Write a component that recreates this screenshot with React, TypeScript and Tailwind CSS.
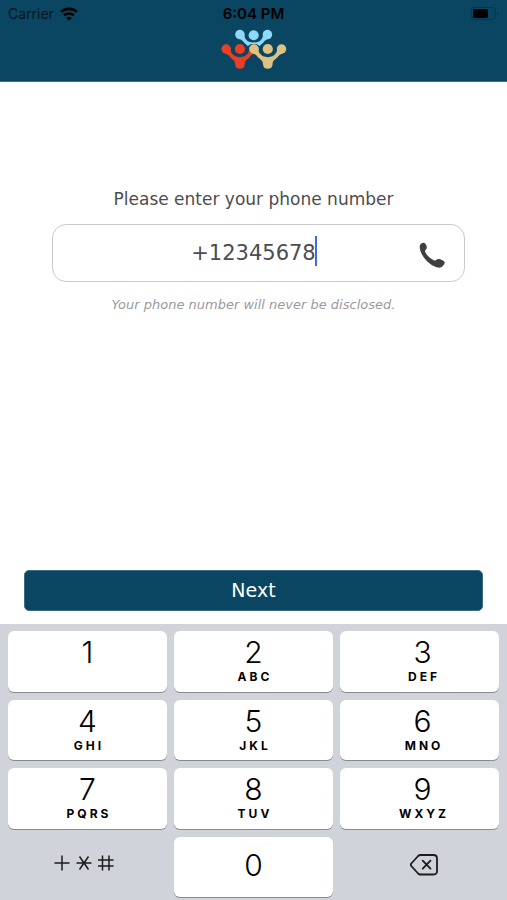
import React, { useState } from 'react';

const KEYS = [
  { digit: '1', letters: '' },
  { digit: '2', letters: 'ABC' },
  { digit: '3', letters: 'DEF' },
  { digit: '4', letters: 'GHI' },
  { digit: '5', letters: 'JKL' },
  { digit: '6', letters: 'MNO' },
  { digit: '7', letters: 'PQRS' },
  { digit: '8', letters: 'TUV' },
  { digit: '9', letters: 'WXYZ' },
];

const WifiIcon = () => (
  <svg width="18" height="14" viewBox="0 0 18 14" fill="none" stroke="#000" strokeWidth="2.6" aria-hidden="true">
    <path d="M1 4.9C5.4 0.9 12.6 0.9 17 4.9" />
    <path d="M4 8.3C6.8 5.8 11.2 5.8 14 8.3" />
    <path d="M9 13.8L6.2 10.8C7.8 9.4 10.2 9.4 11.8 10.8Z" fill="#000" stroke="none" />
  </svg>
);

const BatteryIcon = () => (
  <svg width="28" height="14" viewBox="0 0 28 14" aria-hidden="true">
    <rect x="0.5" y="0.5" width="24" height="12" rx="3" fill="none" stroke="#06354b" />
    <rect x="2" y="2" width="15" height="9" rx="1.5" fill="#000" />
    <path d="M26 4.5C28 5.2 28 7.8 26 8.5Z" fill="#06354b" />
  </svg>
);

interface PersonProps {
  x: number;
  y: number;
  color: string;
}

const Person: React.FC<PersonProps> = ({ x, y, color }) => (
  <g transform={`translate(${x} ${y})`} fill={color}>
    <circle cx="-42" cy="0" r="14.5" />
    <circle cx="0" cy="0" r="15.5" />
    <circle cx="42" cy="0" r="14.5" />
    <path d="M-46 13C-38 15 -34 20 -29 26C-23 32 -16 35 -15 42L-14 50C-13 56 -8 60 0 60C8 60 13 56 14 50L15 42C16 35 23 32 29 26C34 20 38 15 46 13L29 -6C29 2 28 9 24 14C19 21 11 25 0 25C-11 25 -19 21 -24 14C-28 9 -29 2 -29 -6Z" />
  </g>
);

const Logo = () => (
  <svg width="66" height="40" viewBox="33 88 200 122" role="img" aria-label="Logo">
    <g transform="translate(132 105)" fill="#8ed8f8">
      <circle cx="-42" cy="0" r="14.5" />
      <circle cx="0" cy="2" r="15.5" />
      <circle cx="42" cy="0" r="14.5" />
      <path d="M-46 13C-38 15 -34 19 -29 25L-18 35L-8 29L8 29L18 35L29 25C34 19 38 15 46 13L29 -6C29 2 28 9 24 14C19 21 11 24 0 24C-11 24 -19 21 -24 14C-28 9 -29 2 -29 -6Z" />
    </g>
    <Person x={90} y={149} color="#ea3f24" />
    <Person x={175} y={149} color="#ddc283" />
  </svg>
);

const PhoneIcon = () => (
  <svg width="26" height="26" viewBox="507 189 77 77" fill="#3f3f41" aria-hidden="true">
    <path d="M509 202C509 195 517 190 522 191C527 193 531 201 530 207C529 213 523 213 525 218C530 229 541 239 552 244C557 245 559 239 565 239C571 239 580 244 583 248C584 254 577 264 569 265C556 265 541 256 530 245C518 233 509 216 509 202Z" />
  </svg>
);

const BackspaceIcon = () => (
  <svg width="28" height="22" viewBox="0 0 28 22" fill="none" stroke="#1c1c1e" strokeWidth="1.8" strokeLinecap="round" strokeLinejoin="round" aria-hidden="true">
    <path d="M10.5 1H23.5C25.8 1 27 2.3 27 4.5V17C27 19.2 25.8 20.5 23.5 20.5H10.5C9.5 20.5 8.8 20.2 8.1 19.5L1.3 12C0.7 11.2 0.7 10.3 1.3 9.5L8.1 2C8.8 1.3 9.5 1 10.5 1Z" />
    <path d="M12.7 6.7L20.5 14.7M20.5 6.7L12.7 14.7" />
  </svg>
);

const SymbolsIcon = () => (
  <svg width="60" height="18" viewBox="0 0 60 18" fill="none" stroke="#1c1c1e" strokeWidth="1.5" aria-hidden="true">
    <path d="M0.5 9H15.5M8 1.5V16.5" />
    <path d="M22.5 9H37.5M25.5 2.5L34.5 15.5M34.5 2.5L25.5 15.5" />
    <path d="M44 6H59.5M44 12H59.5M48.5 1.5V16.5M55 1.5V16.5" />
  </svg>
);

export default function App() {
  const [phone, setPhone] = useState('+12345678');

  return (
    <div className="min-h-screen flex flex-col bg-white font-['DejaVu_Sans',Verdana,sans-serif]">
      {/* Header */}
      <header className="bg-[#0a4662] border-b border-[#3d6c83] pb-3 flex flex-col items-center font-['Inter',sans-serif] text-black">
        <div className="w-full grid grid-cols-3 items-center h-7 px-2">
          <div className="flex items-center gap-1.5 text-sm text-[#04151e]">
            <span>Carrier</span>
            <WifiIcon />
          </div>
          <span className="text-center text-[15px] font-semibold">6:04 PM</span>
          <div className="flex justify-end">
            <BatteryIcon />
          </div>
        </div>
        <div className="pt-px">
          <Logo />
        </div>
      </header>

      {/* Form */}
      <main className="flex-1 flex flex-col px-6 pb-[13px]">
        <div className="flex flex-col pl-7 pr-[18px] pt-[105px]">
          <label htmlFor="phone" className="pr-2.5 text-center text-[17px] leading-6 text-[#4d4d4f]">
            Please enter your phone number
          </label>
          <div className="relative w-full mt-[13px]">
            <input
              id="phone"
              type="tel"
              value={phone}
              onChange={(e) => setPhone(e.target.value)}
              className="block w-full h-[58px] pl-10 pr-[50px] rounded-[14px] border border-[#c9c9cc] bg-white text-center text-[21px] text-[#4d4d4f] outline-none caret-transparent"
            />
            <span className="absolute left-1/2 top-3 ml-14 w-0.5 h-[30px] bg-[#4169e1]" />
            <span className="absolute right-5 top-[18px]">
              <PhoneIcon />
            </span>
          </div>
          <p className="mt-[11px] pr-2.5 text-center text-[13px] leading-6 italic text-[#9a9a9e]">
            Your phone number will never be disclosed.
          </p>
        </div>
        <button className="mt-auto w-full h-[41px] rounded-[5px] border border-[#3d6c83] bg-[#0a4662] text-white text-[19px]">
          Next
        </button>
      </main>

      {/* Keypad */}
      <div className="h-[276px] px-2 pt-[7px] pb-[3px] grid grid-cols-3 grid-rows-4 gap-x-[7px] gap-y-2 bg-[#d1d3da] font-['Inter',sans-serif] text-black">
        {KEYS.map((key) => (
          <button
            key={key.digit}
            onClick={() => setPhone((p) => p + key.digit)}
            className="flex flex-col items-center pt-[3px] nth-[3n]:pl-1.5 rounded-md bg-white shadow-[0_1px_0_#898a8d]"
          >
            <span className="text-[30px] leading-9 font-light">{key.digit}</span>
            <span className="mt-px pl-[3px] text-xs leading-3 font-bold tracking-[3px]">{key.letters}</span>
          </button>
        ))}
        <button aria-label="Symbols" className="flex items-center justify-center pr-2 pb-2">
          <SymbolsIcon />
        </button>
        <button
          onClick={() => setPhone((p) => p + '0')}
          className="flex items-center justify-center pb-0.5 rounded-md bg-white shadow-[0_1px_0_#898a8d] text-[30px] font-light"
        >
          0
        </button>
        <button
          aria-label="Delete"
          onClick={() => setPhone((p) => p.slice(0, -1))}
          className="flex items-center justify-center pl-2 pb-1"
        >
          <BackspaceIcon />
        </button>
      </div>
    </div>
  );
}
